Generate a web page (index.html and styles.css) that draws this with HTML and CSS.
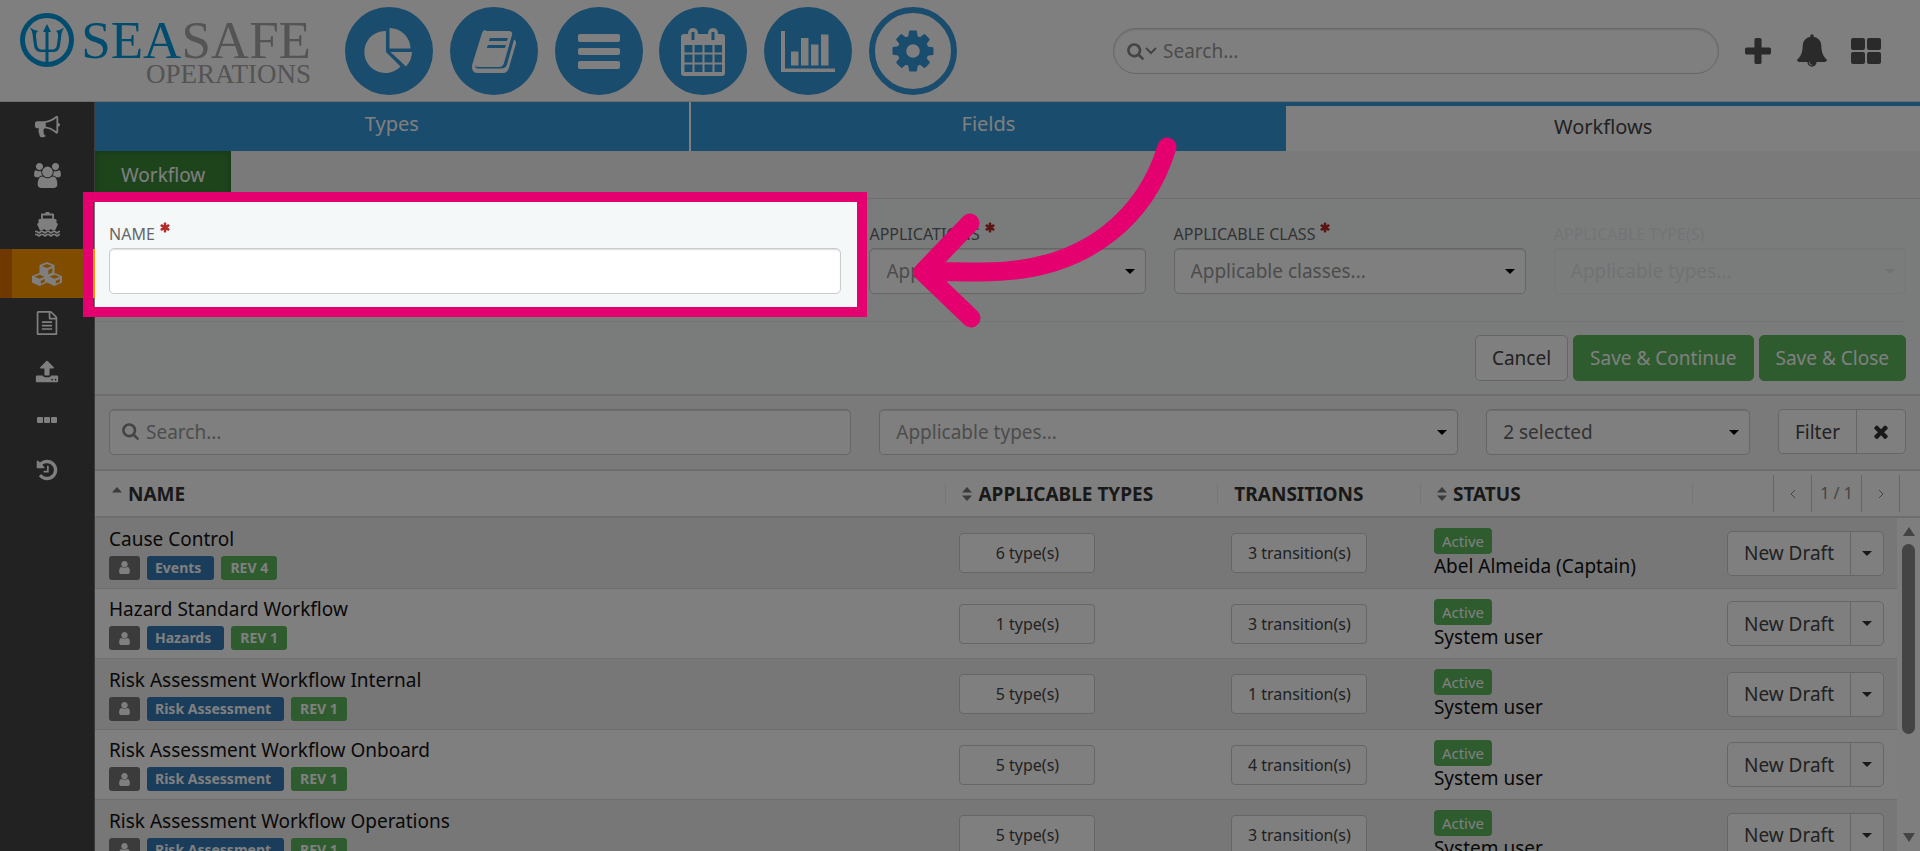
FILE: index.html
```html
<!DOCTYPE html>
<html lang="en">
<head>
<meta charset="utf-8">
<title>Seasafe Operations - Workflows</title>
<link rel="stylesheet" href="styles.css">
</head>
<body>
<svg class="defs" aria-hidden="true">
  <symbol id="i-user" viewBox="0 0 1792 1792"><path d="M1536 1399q0 109-62.500 187t-150.500 78h-854q-88 0-150.500-78t-62.500-187q0-85 8.500-160.500t31.500-152 58.500-131 94-89 134.500-34.500q131 128 313 128t313-128q76 0 134.500 34.500t94 89 58.500 131 31.500 152 8.500 160.500zm-256-887q0 159-112.500 271.500t-271.500 112.500-271.500-112.500-112.500-271.500 112.500-271.500 271.500-112.500 271.500 112.500 112.500 271.500z"/></symbol>
  <symbol id="i-search" viewBox="0 0 1792 1792"><path d="M1216 832q0-185-131.500-316.500t-316.500-131.500-316.500 131.500-131.500 316.500 131.500 316.500 316.500 131.500 316.500-131.500 131.500-316.500zm512 832q0 52-38 90t-90 38q-54 0-90-38l-343-342q-179 124-399 124-143 0-273.500-55.500t-225-150-150-225-55.500-273.500 55.500-273.500 150-225 225-150 273.500-55.500 273.500 55.500 225 150 150 225 55.500 273.500q0 220-124 399l343 343q37 37 37 90z"/></symbol>
  <symbol id="i-required" viewBox="128 128 1536 1536"><path d="M1546 1050q46 26 59.500 77.500t-12.500 97.500l-64 110q-26 46-77.500 59.500t-97.500-12.500l-266-153v307q0 52-38 90t-90 38h-128q-52 0-90-38t-38-90v-307l-266 153q-46 26-97.500 12.500t-77.500-59.500l-64-110q-26-46-12.500-97.500t59.500-77.500l266-154-266-154q-46-26-59.500-77.500t12.500-97.500l64-110q26-46 77.500-59.500t97.500 12.500l266 153v-307q0-52 38-90t90-38h128q52 0 90 38t38 90v307l266-153q46-26 97.500-12.500t77.500 59.500l64 110q26 46 12.500 97.500t-59.500 77.500l-266 154z"/></symbol>
  <symbol id="i-sort" viewBox="0 0 10 14"><path d="M5 0l5 5.500H0zM5 14L0 8.500h10z"/></symbol>
</svg>

<header class="header">
  <a class="logo" href="#" aria-label="Seasafe Operations">
    <svg class="logo-mark" viewBox="0 0 54 54"><circle cx="27" cy="27" r="24.500" fill="none" stroke="currentColor" stroke-width="5"/><path d="M27 11l4 8h-2.500v17.500h4.500q3.500-.5 4-5l1-8q.3-5-2.500-5.500 5-1 9-3.500-3 3-3.300 9l-1.200 9q-1 6.500-6 6.500h-5.500V51h-3V39H20q-5 0-6-6.500l-1.200-9Q12.500 17.500 9.500 14.500q4 2.500 9 3.500-2.800.5-2.500 5.500l1 8q.5 4.500 4 5h4.500V19H23z" fill="currentColor"/></svg>
    <span class="logo-text"><span class="logo-name"><span class="logo-sea">SEA</span>SAFE</span><span class="logo-sub">OPERATIONS</span></span>
  </a>
  <nav class="apps" aria-label="Applications">
    <a class="app" href="#" aria-label="Dashboard"><svg viewBox="0 0 88 88"><path d="M41 24v21l14.500 14.500A21 21 0 1 1 41 24z"/><path d="M44.500 21A21 21 0 0 1 65.500 41.500h-21z"/><path d="M45.500 45H67q-.3 8.500-6 14.500z"/></svg></a>
    <a class="app" href="#" aria-label="Library"><svg viewBox="0 0 88 88"><path fill-rule="evenodd" d="M36 24h23q4 0 3 4l-8 28q-1 4-5 4H29q-3 0-3.500-1.500-.5 3 3.500 3H51q5 0 6-4l7-25q2.500 1 2 4l-7 24q-1.500 5.500-6 5.500H28q-6 0-6-6 0-2 1-5l9-29q1-3 4-3zM40 31l-1.200 3h18l1.200-3zM38 38l-1.200 3h18l1.200-3z"/></svg></a>
    <a class="app" href="#" aria-label="Lists"><svg viewBox="0 0 88 88"><rect x="23" y="27" width="42" height="8" rx="2"/><rect x="23" y="41" width="42" height="7" rx="2"/><rect x="23" y="54" width="42" height="8" rx="2"/></svg></a>
    <a class="app" href="#" aria-label="Calendar"><svg viewBox="0 0 88 88"><path fill-rule="evenodd" d="M25 27h4q0-6 5-6t5 6h10q0-6 5-6t5 6h4q3 0 3 3v36q0 3-3 3H25q-3 0-3-3V30q0-3 3-3zM32.500 25v8h3v-8zM52.500 25v8h3v-8zM25.500 38v7.500h8V38zM35.500 38v7.500h8V38zM45.500 38v7.500h8V38zM55.500 38v7.500H63V38zM25.500 47.500v8h8v-8zM35.500 47.500v8h8v-8zM45.500 47.500v8h8v-8zM55.500 47.500v8H63v-8zM25.500 57.500V65h8v-7.500zM35.500 57.500V65h8v-7.500zM45.500 57.500V65h8v-7.500zM55.500 57.500V65H63v-7.500z"/></svg></a>
    <a class="app" href="#" aria-label="Reports"><svg viewBox="0 0 88 88"><path d="M17 24h4v37.500h50V65H17zM27 44.500h7.500v14H27zM37 31h7.500v27.500H37zM47 37.500h7.500v21H47zM57 27.500h7.500v31H57z"/></svg></a>
    <a class="app app-current" href="#" aria-label="Administration"><svg viewBox="-529 -529 2850 2850"><path d="M1152 896q0-106-75-181t-181-75-181 75-75 181 75 181 181 75 181-75 75-181zm512-109v222q0 12-8 23t-20 13l-185 28q-19 54-39 91 35 50 107 138 10 12 10 25t-9 23q-27 37-99 108t-94 71q-12 0-26-9l-138-108q-44 23-91 38-16 136-29 186-7 28-36 28h-222q-14 0-24.500-8.500t-11.500-21.500l-28-184q-49-16-90-37l-141 107q-10 9-25 9-14 0-25-11-126-114-165-168-7-10-7-23 0-12 8-23 15-21 51-66.500t54-70.500q-27-50-41-99l-183-27q-13-2-21-12.500t-8-23.500v-222q0-12 8-23t19-13l186-28q14-46 39-92-40-57-107-138-10-12-10-24 0-10 9-23 26-36 98.500-107.500t94.500-71.500q13 0 26 10l138 107q44-23 91-38 16-136 29-186 7-28 36-28h222q14 0 24.500 8.500t11.500 21.500l28 184q49 16 90 37l142-107q9-9 24-9 13 0 25 10 129 119 165 170 7 8 7 22 0 12-8 23-15 21-51 66.500t-54 70.500q26 50 41 98l183 28q13 2 21 12.500t8 23.500z"/></svg></a>
  </nav>
  <div class="header-tools">
    <label class="global-search"><svg class="icon-search"><use href="#i-search"/></svg><svg class="icon-chevron" viewBox="0 0 12 8"><path d="M1 1l5 5 5-5" fill="none" stroke="currentColor" stroke-width="2"/></svg><input type="search" placeholder="Search..." aria-label="Search everything"></label>
    <button class="tool" type="button" aria-label="Add"><svg viewBox="192 128 1408 1408"><path d="M1600 736v192q0 40-28 68t-68 28h-416v416q0 40-28 68t-68 28h-192q-40 0-68-28t-28-68v-416h-416q-40 0-68-28t-28-68v-192q0-40 28-68t68-28h416v-416q0-40 28-68t68-28h192q40 0 68 28t28 68v416h416q40 0 68 28t28 68z"/></svg></button>
    <button class="tool" type="button" aria-label="Notifications"><svg class="bell" viewBox="64 0 1664 1792"><path d="M912 1696q0-16-16-16-59 0-101.500-42.500t-42.500-101.500q0-16-16-16t-16 16q0 73 51.500 124.500t124.500 51.500q16 0 16-16zm816-288q0 52-38 90t-90 38h-448q0 106-75 181t-181 75-181-75-75-181h-448q-52 0-90-38t-38-90q50-42 91-88t85-119.500 74.500-158.500 50-206 19.500-260q0-152 117-282.500t307-158.500q-8-19-8-39 0-40 28-68t68-28 68 28 28 68q0 20-8 39 190 28 307 158.500t117 282.500q0 139 19.500 260t50 206 74.500 158.500 85 119.500 91 88z"/></svg></button>
    <button class="tool" type="button" aria-label="Modules"><svg class="grid-icon" viewBox="0 0 30 26"><rect width="14" height="12" rx="2"/><rect x="16" width="14" height="12" rx="2"/><rect y="14" width="14" height="12" rx="2"/><rect x="16" y="14" width="14" height="12" rx="2"/></svg></button>
  </div>
</header>

<div class="shell">
  <nav class="sidebar" aria-label="Administration sections">
    <a href="#" aria-label="Announcements"><svg class="wide" viewBox="0 0 1792 1792"><path d="M1664 640q53 0 90.500 37.500t37.500 90.500-37.500 90.500-90.500 37.500v384q0 52-38 90t-90 38q-417-347-812-380-58 19-91 66t-31 100.500 40 92.500q-20 33-23 65.500t6 58 33.500 55 48 50 61.500 50.500q-29 58-111.500 83t-168.500 11.500-132-55.500q-7-23-29.500-87.500t-32-94.500-23-89-15-101 3.500-98.500 22-110.500h-122q-66 0-113-47t-47-113v-192q0-66 47-113t113-47h480q435 0 896-384 52 0 90 38t38 90v384zm-128 604v-954q-394 302-768 343v270q377 42 768 341z"/></svg></a>
    <a href="#" aria-label="Users"><svg class="wide" viewBox="-64 0 1920 1792"><path d="M529 896q-162 5-265 128h-134q-82 0-138-40.500t-56-118.500q0-353 124-353 6 0 43.500 21t97.500 42.500 119 21.500q67 0 133-23-5 37-5 66 0 139 81 256zm1071 637q0 120-73 189.500t-194 69.500h-874q-121 0-194-69.500t-73-189.500q0-53 3.500-103.500t14-109 26.500-108.500 43-97.500 62-81 85.500-53.500 111.500-20q10 0 43 21.500t73 48 107 48 135 21.500 135-21.500 107-48 73-48 43-21.500q61 0 111.500 20t85.500 53.500 62 81 43 97.500 26.500 108.500 14 109 3.500 103.500zm-1024-1277q0 106-75 181t-181 75-181-75-75-181 75-181 181-75 181 75 75 181zm704 384q0 159-112.500 271.500t-271.500 112.500-271.500-112.500-112.500-271.500 112.500-271.500 271.500-112.500 271.500 112.500 112.500 271.500zm576 225q0 78-56 118.500t-138 40.500h-134q-103-123-265-128 81-117 81-256 0-29-5-66 66 23 133 23 59 0 119-21.500t97.500-42.500 43.500-21q124 0 124 353zm-128-609q0 106-75 181t-181 75-181-75-75-181 75-181 181-75 181 75 75 181z"/></svg></a>
    <a href="#" aria-label="Ships"><svg class="wide" viewBox="0 0 27 25"><path fill-rule="evenodd" d="M11.500 0h4v1.500h3.500q1 0 1 1V7h1.500q1 0 1 1v3l1 .5q.7.500.2 1.300L21 18.500h-2l-2-1.500-2 1.500h-3L10 17l-2 1.500H6l-2.700-5.700q-.5-.8.200-1.300l1-.5V8q0-1 1-1H7V2.500q0-1 1-1h3.500zM8.800 3.500v3h9.400v-3z"/><path d="M1 19.500h2l2 1.500 2-1.500h2l2 1.500 2-1.500h2l2 1.500 2-1.500h2l2 1.500 2-1.500h1M1 22.500h2l2 1.500 2-1.500h2l2 1.500 2-1.500h2l2 1.500 2-1.500h2l2 1.500 2-1.500h1" fill="none" stroke="currentColor" stroke-width="1.600"/></svg></a>
    <a class="current" href="#" aria-label="Types and workflows" aria-current="page"><svg class="cubes" viewBox="0 0 30 24"><path fill-rule="evenodd" d="M15 0l7.500 3v8L30 14v6.500L22.500 24 15 20.500 7.500 24 0 20.500V14l7.500-3V3zM15 2L10 4l5 2 5-2zM16.300 8v4.200l4-1.800V6.300zM7.500 12.800l-5 2 5 2 5-2zM22.500 12.800l-5 2 5 2 5-2zM8.800 18.800v2.900l4-1.800v-2.800zM23.800 18.800v2.900l4-1.800v-2.800z"/></svg></a>
    <a href="#" aria-label="Documents"><svg viewBox="0 0 1792 1792"><path d="M1596 380q28 28 48 76t20 88v1152q0 40-28 68t-68 28h-1344q-40 0-68-28t-28-68v-1600q0-40 28-68t68-28h896q40 0 88 20t76 48zm-444-244v376h376q-10-29-22-41l-313-313q-12-12-41-22zm384 1528v-1024h-416q-40 0-68-28t-28-68v-416h-768v1536h1280zm-1024-864q0-14 9-23t23-9h704q14 0 23 9t9 23v64q0 14-9 23t-23 9h-704q-14 0-23-9t-9-23v-64zm736 224q14 0 23 9t9 23v64q0 14-9 23t-23 9h-704q-14 0-23-9t-9-23v-64q0-14 9-23t23-9h704zm0 256q14 0 23 9t9 23v64q0 14-9 23t-23 9h-704q-14 0-23-9t-9-23v-64q0-14 9-23t23-9h704z"/></svg></a>
    <a href="#" aria-label="Upload"><svg viewBox="0 0 1792 1792"><path d="M1344 1472q0-26-19-45t-45-19-45 19-19 45 19 45 45 19 45-19 19-45zm256 0q0-26-19-45t-45-19-45 19-19 45 19 45 45 19 45-19 19-45zm128-224v320q0 40-28 68t-68 28h-1472q-40 0-68-28t-28-68v-320q0-40 28-68t68-28h427q21 56 70.500 92t110.500 36h256q61 0 110.500-36t70.500-92h427q40 0 68 28t28 68zm-325-648q-17 40-59 40h-256v448q0 26-19 45t-45 19h-256q-26 0-45-19t-19-45v-448h-256q-42 0-59-40-17-39 14-69l448-448q18-19 45-19t45 19l448 448q31 30 14 69z"/></svg></a>
    <a href="#" aria-label="More"><svg viewBox="0 0 24 24"><rect x="2" y="8" width="6" height="6" rx="1"/><rect x="9" y="8" width="6" height="6" rx="1"/><rect x="16" y="8" width="6" height="6" rx="1"/></svg></a>
    <a href="#" aria-label="History"><svg viewBox="0 0 1792 1792"><path d="M1664 896q0 156-61 298t-164 245-245 164-298 61q-172 0-327-72.500t-264-204.500q-7-10-6.500-22.500t8.500-20.500l137-138q10-9 25-9 16 2 23 12 73 95 179 147t225 52q104 0 198.500-40.500t163.500-109.500 109.500-163.500 40.500-198.500-40.500-198.500-109.500-163.500-163.500-109.500-198.500-40.500q-98 0-188 35.500t-160 101.500l137 138q31 30 14 69-17 40-59 40h-448q-26 0-45-19t-19-45v-448q0-42 40-59 39-17 69 14l130 129q107-101 244.500-156.500t284.500-55.500q156 0 298 61t245 164 164 245 61 298zm-640-288v448q0 14-9 23t-23 9h-320q-14 0-23-9t-9-23v-64q0-14 9-23t23-9h224v-352q0-14 9-23t23-9h64q14 0 23 9t9 23z"/></svg></a>
  </nav>

  <main class="main">
    <nav class="tabs" aria-label="Configuration">
      <a class="tab" href="#">Types</a>
      <a class="tab" href="#">Fields</a>
      <a class="tab tab-current" href="#" aria-current="page">Workflows</a>
    </nav>
    <div class="subnav"><a class="subtab" href="#">Workflow</a></div>

    <form class="editor">
      <div class="fields">
        <div class="field field-name">
          <label for="name">NAME <svg class="required"><use href="#i-required"/></svg></label>
          <input class="control" id="name" type="text">
          <div class="spotlight"></div>
          <svg class="pointer" viewBox="905 130 280 205" aria-hidden="true"><path d="M1167 147C1148 210 1093 272 983 272Q950 272 930 271M970 223L923 272L971 318"/></svg>
        </div>
        <div class="field">
          <label for="apps">APPLICATIONS <svg class="required"><use href="#i-required"/></svg></label>
          <div class="select"><select class="control muted" id="apps"><option>Applications...</option></select></div>
        </div>
        <div class="field">
          <label for="class">APPLICABLE CLASS <svg class="required"><use href="#i-required"/></svg></label>
          <div class="select"><select class="control muted" id="class"><option>Applicable classes...</option></select></div>
        </div>
        <div class="field field-off">
          <label for="types">APPLICABLE TYPE(S)</label>
          <div class="select"><select class="control muted" id="types" disabled><option>Applicable types...</option></select></div>
        </div>
      </div>
      <div class="actions">
        <button class="btn" type="button">Cancel</button>
        <button class="btn btn-save" type="button">Save &amp; Continue</button>
        <button class="btn btn-save" type="button">Save &amp; Close</button>
      </div>
    </form>

    <form class="filters">
      <div class="filter-cell"><div class="search-box"><svg class="icon-search"><use href="#i-search"/></svg><input class="control" type="search" placeholder="Search..." aria-label="Search workflows"></div></div>
      <div class="filter-cell"><div class="select"><select class="control muted" aria-label="Applicable types"><option>Applicable types...</option></select></div></div>
      <div class="filter-cell"><div class="select"><select class="control" aria-label="Status"><option>2 selected</option></select></div></div>
      <div class="filter-cell group"><button class="btn btn-filter" type="button">Filter</button><button class="btn btn-clear" type="button" aria-label="Clear filter"><svg viewBox="302 238 1188 1316"><path d="M1490 1322q0 40-28 68l-136 136q-28 28-68 28t-68-28l-294-294-294 294q-28 28-68 28t-68-28l-136-136q-28-28-28-68t28-68l294-294-294-294q-28-28-28-68t28-68l136-136q28-28 68-28t68 28l294 294 294-294q28-28 68-28t68 28l136 136q28 28 28 68t-28 68l-294 294 294 294q28 28 28 68z"/></svg></button></div>
    </form>

    <div class="list">
      <table>
        <colgroup><col class="c-name"><col class="c-types"><col class="c-trans"><col class="c-status"><col></colgroup>
        <thead><tr>
          <th><div class="th"><svg class="sort"><path d="M5 0l5 5.500H0z"/></svg>NAME</div></th>
          <th><div class="th th-line"><svg class="sort"><use href="#i-sort"/></svg>APPLICABLE TYPES</div></th>
          <th><div class="th th-line">TRANSITIONS</div></th>
          <th><div class="th th-line"><svg class="sort"><use href="#i-sort"/></svg>STATUS</div></th>
          <th><div class="th th-line"><div class="pager"><button type="button" aria-label="Previous page"><svg viewBox="0 0 6 10"><path d="M5 1L1 5l4 4"/></svg></button><span>1 / 1</span><button type="button" aria-label="Next page"><svg viewBox="0 0 6 10"><path d="M1 1l4 4-4 4"/></svg></button></div></div></th>
        </tr></thead>
        <tbody>
          <tr><td><div class="title">Cause Control</div><div class="badges"><span class="badge"><svg><use href="#i-user"/></svg></span><span class="badge blue">Events</span><span class="badge green">REV 4</span></div></td><td><button class="pill" type="button">6 type(s)</button></td><td><button class="pill" type="button">3 transition(s)</button></td><td><span class="status">Active</span><div>Abel Almeida (Captain)</div></td><td><div class="group"><button class="btn" type="button">New Draft</button><button class="btn btn-more" type="button" aria-label="More actions"></button></div></td></tr>
          <tr><td><div class="title">Hazard Standard Workflow</div><div class="badges"><span class="badge"><svg><use href="#i-user"/></svg></span><span class="badge blue">Hazards</span><span class="badge green">REV 1</span></div></td><td><button class="pill" type="button">1 type(s)</button></td><td><button class="pill" type="button">3 transition(s)</button></td><td><span class="status">Active</span><div>System user</div></td><td><div class="group"><button class="btn" type="button">New Draft</button><button class="btn btn-more" type="button" aria-label="More actions"></button></div></td></tr>
          <tr><td><div class="title">Risk Assessment Workflow Internal</div><div class="badges"><span class="badge"><svg><use href="#i-user"/></svg></span><span class="badge blue">Risk Assessment</span><span class="badge green">REV 1</span></div></td><td><button class="pill" type="button">5 type(s)</button></td><td><button class="pill" type="button">1 transition(s)</button></td><td><span class="status">Active</span><div>System user</div></td><td><div class="group"><button class="btn" type="button">New Draft</button><button class="btn btn-more" type="button" aria-label="More actions"></button></div></td></tr>
          <tr><td><div class="title">Risk Assessment Workflow Onboard</div><div class="badges"><span class="badge"><svg><use href="#i-user"/></svg></span><span class="badge blue">Risk Assessment</span><span class="badge green">REV 1</span></div></td><td><button class="pill" type="button">5 type(s)</button></td><td><button class="pill" type="button">4 transition(s)</button></td><td><span class="status">Active</span><div>System user</div></td><td><div class="group"><button class="btn" type="button">New Draft</button><button class="btn btn-more" type="button" aria-label="More actions"></button></div></td></tr>
          <tr><td><div class="title">Risk Assessment Workflow Operations</div><div class="badges"><span class="badge"><svg><use href="#i-user"/></svg></span><span class="badge blue">Risk Assessment</span><span class="badge green">REV 1</span></div></td><td><button class="pill" type="button">5 type(s)</button></td><td><button class="pill" type="button">3 transition(s)</button></td><td><span class="status">Active</span><div>System user</div></td><td><div class="group"><button class="btn" type="button">New Draft</button><button class="btn btn-more" type="button" aria-label="More actions"></button></div></td></tr>
        </tbody>
      </table>
      <div class="scrollbar" aria-hidden="true"><span class="scroll-up"></span><span class="thumb"></span><span class="scroll-down"></span></div>
    </div>
  </main>
</div>
</body>
</html>
```
FILE: styles.css
```css
* { box-sizing: border-box; }

body {
  margin: 0;
  height: 100vh;
  display: flex;
  flex-direction: column;
  overflow: hidden;
  background: #fff;
  color: #222;
  font: 19px/24px "Noto Sans", "Open Sans", sans-serif;
}

a { color: inherit; text-decoration: none; }
button, input, select { font: inherit; color: inherit; }
svg { display: block; fill: currentColor; flex: none; }
.defs { position: absolute; width: 0; height: 0; }

/* Header */
.header {
  display: flex;
  align-items: center;
  height: 102px;
  flex: none;
  padding: 0 39px 0 20px;
  border-bottom: 1px solid #ddd;
}
.logo { display: flex; width: 325px; height: 76px; flex: none; color: #0099dd; }
.logo-mark { width: 54px; height: 54px; }
.logo-text {
  display: flex;
  flex-direction: column;
  align-items: flex-end;
  width: 237px;
  padding-top: 3px;
  font-family: "Liberation Serif", serif;
  color: #a8a8a8;
}
.logo-name { font-size: 53px; line-height: 48px; }
.logo-sea { color: #0099dd; }
.logo-sub { font-size: 27px; line-height: 20px; }

.apps { display: flex; justify-content: space-between; width: 612px; flex: none; }
.app { width: 88px; height: 88px; border-radius: 50%; background: #3498db; color: #fff; }
.app-current { border: 6px solid #3498db; background: #fff; color: #3498db; }
.app-current svg { width: 76px; height: 76px; }

.header-tools { display: flex; align-items: center; justify-content: flex-end; gap: 24px; flex: 1; }
.global-search {
  display: flex;
  align-items: center;
  width: 606px;
  height: 46px;
  padding: 0 12px;
  border: 1px solid #ccc;
  border-radius: 23px;
  box-shadow: inset 0 1px 2px #ddd;
  color: #888;
}
.global-search input { flex: 1; min-width: 0; margin-left: 6px; padding: 0; border: 0; outline: 0; background: none; }
.icon-search { width: 19px; height: 18px; color: #888; }
.icon-chevron { width: 12px; height: 8px; }
::placeholder { color: #999; opacity: 1; }
.tool { width: 30px; padding: 0; border: 0; background: none; color: #555; }
.tool svg { width: 26px; height: 26px; margin: 0 auto; }
.tool .bell, .tool .grid-icon { width: 30px; }
.tool .bell { height: 33px; }

/* Sidebar */
.shell { display: flex; flex: 1; min-height: 0; }
.sidebar { width: 95px; flex: none; background: #444; border-right: 1px solid #777; color: #fff; }
.sidebar a { display: flex; align-items: center; justify-content: center; height: 49px; }
.sidebar svg { width: 24px; height: 24px; }
.sidebar .wide { width: 27px; height: 25px; }
.sidebar .current { margin-right: -1px; padding-right: 14px; border-left: 12px solid #e07000; background: #ff9900; }
.sidebar .cubes { width: 30px; height: 24px; }

/* Tabs */
.main { display: flex; flex-direction: column; flex: 1; min-width: 0; }
.tabs { display: grid; grid-template-columns: 47fr 47fr 50fr; flex: none; }
.tab {
  height: 49px;
  border-right: 2px solid #fff;
  background: #3498db;
  color: #fff;
  font-size: 20px;
  text-align: center;
  line-height: 44px;
}
.tab:nth-child(2) { border-right: 0; }
.tab-current { border-top: 4px solid #3498db; border-right: 0; background: #fff; color: #444; line-height: 42px; }
.subnav { display: flex; height: 48px; flex: none; background: #f5f5f5; border-bottom: 1px solid #ddd; }
.subtab {
  padding: 0 26px;
  background: #3c8838;
  box-shadow: inset 0 0 6px #2a6627;
  color: #fff;
  line-height: 48px;
}

/* Editor */
.editor { flex: none; background: #f4f8f9; border-bottom: 2px solid #ddd; }
.fields { display: grid; grid-template-columns: 10fr 4fr 5fr 5fr; }
.field { padding: 23px 14px 27px; min-width: 0; }
.field-name { position: relative; }
.field label { display: flex; gap: 5px; height: 26px; font-size: 16px; color: #666; }
.required { width: 10px; height: 11px; color: #b52b27; }
.control {
  display: block;
  width: 100%;
  height: 46px;
  padding: 0 16px;
  border: 1px solid #ccc;
  border-radius: 5px;
  outline: 0;
  background: #fff;
  box-shadow: inset 0 1px 1px #ddd;
  color: #666;
  appearance: none;
}
.control.muted { color: #999; opacity: 1; }
.select { position: relative; }
.select::after {
  content: "";
  position: absolute;
  right: 11px;
  top: 21px;
  border: 5px solid transparent;
  border-top-color: #000;
  border-bottom: 0;
}
.field-off label { opacity: 0.1; }
.field-off .select { opacity: 0.2; }
.field-off .select::after { border-top-color: #999; }
.field-off .control { background: none; }

.actions {
  display: flex;
  justify-content: flex-end;
  gap: 5px;
  margin-right: 14px;
  padding: 13px 0;
  border-top: 1px solid #e8ecec;
}
.btn {
  height: 46px;
  padding: 0 16px;
  border: 1px solid #ccc;
  border-radius: 5px;
  background: #fff;
  color: #444;
}
.btn-save { border-color: #5cb85c; background: #5cb85c; color: #fff; }

/* Highlight around the active field, with the rest of the page dimmed */
.spotlight {
  position: absolute;
  z-index: 10;
  inset: -7px -12px 4px -12px;
  border: 10px solid #e4006f;
  box-shadow: 0 0 0 4000px rgba(0, 0, 0, 0.5);
  pointer-events: none;
}
.pointer {
  position: absolute;
  z-index: 11;
  left: calc(100% + 50px);
  top: -69px;
  width: 280px;
  height: 205px;
  fill: none;
  stroke: #e4006f;
  stroke-width: 19px;
  stroke-linecap: round;
  stroke-linejoin: round;
  pointer-events: none;
}

/* Filters */
.filters {
  display: grid;
  grid-template-columns: 66fr 52fr 25fr auto;
  flex: none;
  padding: 13px 0 14px;
  background: #f5f5f5;
  border-bottom: 2px solid #ddd;
}
.filter-cell { padding: 0 14px; min-width: 0; }
.search-box { position: relative; }
.search-box .icon-search { position: absolute; left: 12px; top: 13px; }
.search-box .control { padding-left: 36px; }
.group { display: flex; justify-content: flex-end; }
.group .btn { height: 45px; }
.group .btn:first-child { border-radius: 5px 0 0 5px; }
.group .btn:last-child { margin-left: -1px; border-radius: 0 5px 5px 0; }
.btn-clear { width: 50px; padding: 0 17px; color: #333; }
.btn-clear svg { width: 14px; height: 15px; }

/* Workflow list */
.list { position: relative; flex: 1; min-height: 0; overflow: hidden; }
table { width: 100%; table-layout: fixed; border-spacing: 0; }
.c-name { width: 46.6%; }
.c-types, .c-status { width: 14.9%; }
.c-trans { width: 11.1%; }
th { height: 47px; padding: 0; border-bottom: 2px solid #ddd; text-align: left; }
.th { display: flex; align-items: center; height: 22px; padding-left: 17px; color: #333; }
.th-line { padding-left: 16px; border-left: 1px solid #eee; }
.sort { width: 10px; height: 14px; margin-right: 6px; color: #777; }
.pager { display: flex; margin-left: auto; margin-right: 20px; font-weight: 400; font-size: 16px; line-height: 36px; color: #888; }
.pager button { display: flex; align-items: center; justify-content: center; width: 39px; height: 37px; padding: 0; border: 1px solid #ccc; border-width: 0 1px; background: none; }
.pager svg { width: 6px; height: 10px; fill: none; stroke: currentColor; }
.pager span { width: 49px; text-align: center; }

td { height: 71px; padding: 0 14px; border-bottom: 1px solid #ddd; color: #111; }
tr:nth-child(even) td { height: 70px; }
tr:nth-child(odd) td { background: #eee; }
td:last-child { padding-right: 36px; }
.title { line-height: 24px; }
.badges { display: flex; gap: 7px; margin-top: 5px; }
.badge {
  display: flex;
  align-items: center;
  height: 24px;
  padding: 0 8px;
  border-radius: 3px;
  background: #777;
  color: #fff;
  font-size: 14px;
  font-weight: 700;
}
.badge svg { width: 15px; height: 15px; }
.badge.blue { padding-right: 13px; background: #337ab7; }
.badge.green { padding: 0 9px; }
.badge.green, .status { background: #5cb85c; }
.pill { display: block; width: 136px; height: 40px; padding: 0; border: 1px solid #ccc; border-radius: 4px; background: #fff; color: #444; font-size: 16px; }
.status { display: block; width: max-content; padding: 0 8px; border-radius: 4px; color: #fff; font-size: 15px; line-height: 26px; }
.btn-more { display: flex; align-items: center; justify-content: center; width: 34px; padding: 0; }
.btn-more::after { content: ""; border: 5px solid transparent; border-top-color: #333; border-bottom: 0; }

.scrollbar {
  position: absolute;
  top: 47px;
  right: 0;
  bottom: 0;
  display: flex;
  flex-direction: column;
  align-items: center;
  width: 23px;
  padding: 9px 0;
  background: #fcfcfc;
}
.scroll-up, .scroll-down { border: 6px solid transparent; }
.scroll-up { border-top: 0; border-bottom: 9px solid #888; }
.scroll-down { margin-top: auto; border-bottom: 0; border-top: 9px solid #888; }
.thumb { width: 13px; height: 190px; margin-top: 8px; border-radius: 7px; background: #888; }
```
